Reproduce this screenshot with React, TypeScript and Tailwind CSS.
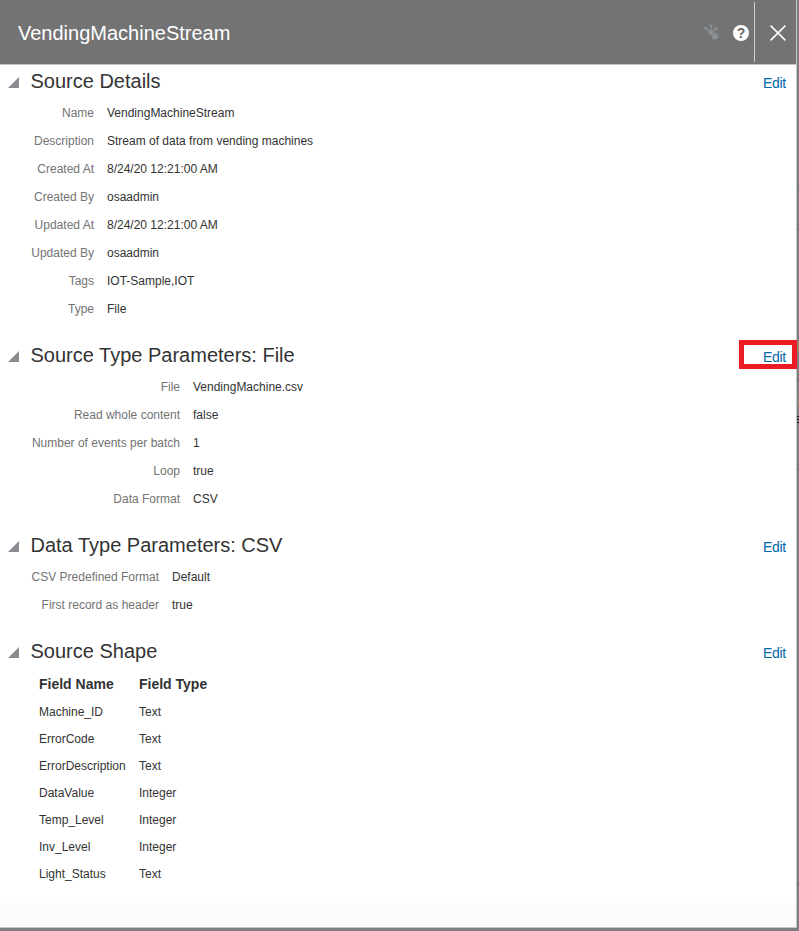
import type { ReactNode } from "react";

type Row = [label: string, value: string];

const details: Row[] = [
  ["Name", "VendingMachineStream"],
  ["Description", "Stream of data from vending machines"],
  ["Created At", "8/24/20 12:21:00 AM"],
  ["Created By", "osaadmin"],
  ["Updated At", "8/24/20 12:21:00 AM"],
  ["Updated By", "osaadmin"],
  ["Tags", "IOT-Sample,IOT"],
  ["Type", "File"],
];

const sourceParams: Row[] = [
  ["File", "VendingMachine.csv"],
  ["Read whole content", "false"],
  ["Number of events per batch", "1"],
  ["Loop", "true"],
  ["Data Format", "CSV"],
];

const dataParams: Row[] = [
  ["CSV Predefined Format", "Default"],
  ["First record as header", "true"],
];

const fields: Row[] = [
  ["Machine_ID", "Text"],
  ["ErrorCode", "Text"],
  ["ErrorDescription", "Text"],
  ["DataValue", "Integer"],
  ["Temp_Level", "Integer"],
  ["Inv_Level", "Integer"],
  ["Light_Status", "Text"],
];

function Section({ title, first, marked, children }: { title: string; first?: boolean; marked?: boolean; children: ReactNode }) {
  return (
    <section>
      <div className={`flex items-end justify-between ${first ? "h-[34px]" : "h-[50px]"}`}>
        <div className="flex h-9 items-center pl-2">
          <svg width="12" height="12" viewBox="0 0 12 12" className="mt-[3px]">
            <path d="M11 0V11H0Z" fill="#8a8d91" />
          </svg>
          <h2 className="ml-[10.5px] text-[20px] leading-9 whitespace-nowrap text-[#333]">{title}</h2>
        </div>
        <div className="relative mr-[10px] h-9 pt-1 text-[14px] leading-8 tracking-[-0.25px] text-[#0068a5]">
          {marked && <span className="absolute top-[3px] -right-[11px] h-[29px] w-[58px] border-5 border-[#ed1c24]" />}
          <a className="relative">Edit</a>
        </div>
      </div>
      {children}
    </section>
  );
}

function Rows({ rows, labelWidth }: { rows: Row[]; labelWidth: string }) {
  return (
    <dl>
      {rows.map(([label, value]) => (
        <div key={label} className="flex h-7 items-center gap-[13px] text-[12px] leading-7 whitespace-nowrap">
          <dt className={`${labelWidth} text-right text-[#737373]`}>{label}</dt>
          <dd className="text-[#333]">{value}</dd>
        </div>
      ))}
    </dl>
  );
}

export default function App() {
  return (
    <div className="relative h-[931px] w-[799px] overflow-hidden bg-[#7f7f7f] font-['Liberation_Sans',Arial,sans-serif]">
      {/* page content showing past the panel's right edge */}
      <svg width="2" height="931" className="absolute top-0 right-0">
        <path d="M1 186h1v1H1z" fill="#1c64b4" />
        <path d="M0 229h2v1H0zM0 380h2v1H0zM0 469h2v1H0zM0 883h2v1H0z" fill="#666" />
        <path d="M1 342h1v10H1z" fill="#a38a55" />
        <path d="M1 399h1v6H1z" fill="#a58a68" />
        <path d="M0 416h2v1H0zM0 419h2v1H0zM0 422h2v1H0z" fill="#171717" />
      </svg>
      <div className="flex h-[928px] w-[797px] flex-col border-r border-b border-[#c6c6c6] bg-white">
        <header className="flex h-[65px] shrink-0 items-center border-b border-[#c6c6c6] bg-[#737373]">
          <h1 className="mt-0.5 ml-[18px] flex-1 text-[20px] leading-8 text-white">VendingMachineStream</h1>
          <svg width="16" height="17" viewBox="0 0 16 17" fill="none" stroke="#8b9399" className="mt-px mr-[13px]">
            <path d="M7 8V2M7 8.5 2 4.5M7 8.5 12 4.5" strokeWidth="1.3" />
            <g fill="#8b9399" stroke="none">
              <circle cx="7" cy="1.8" r="1.4" />
              <circle cx="1.8" cy="4.2" r="1.4" />
              <circle cx="12.2" cy="4.2" r="1.4" />
              <circle cx="6.8" cy="8.6" r="2.4" />
              <circle cx="11" cy="12.2" r="2.8" />
            </g>
            <path d="M11 8v8.4M6.8 12.2h8.4M8.1 9.3l5.8 5.8M13.9 9.3l-5.8 5.8" strokeWidth="1" />
          </svg>
          <span className="mt-0.5 mr-[5px] flex size-4 items-center justify-center rounded-full bg-white text-[14px] leading-4 font-bold text-[#666]">?</span>
          <span className="h-[60px] w-px bg-[#c9d3dc]" />
          <svg width="16" height="16" viewBox="0 0 16 16" fill="none" stroke="white" strokeWidth="1.5" className="mt-0.5 mr-[10px] ml-[15px]">
            <path d="M.6.6 15.4 15.4M15.4.6.6 15.4" />
          </svg>
        </header>
        <main className="h-[838px] shrink-0">
          <Section title="Source Details" first>
            <Rows rows={details} labelWidth="w-[94px]" />
          </Section>
          <Section title="Source Type Parameters: File" marked>
            <Rows rows={sourceParams} labelWidth="w-[180px]" />
          </Section>
          <Section title="Data Type Parameters: CSV">
            <Rows rows={dataParams} labelWidth="w-[159px]" />
          </Section>
          <Section title="Source Shape">
            <table className="ml-[39px] text-left text-[12px] text-[#333]">
              <thead>
                <tr className="h-[29px] text-[14px]">
                  <th className="w-[100px] p-0 pt-0.5 font-bold">Field Name</th>
                  <th className="w-[100px] p-0 pt-0.5 font-bold">Field Type</th>
                </tr>
              </thead>
              <tbody>
                {fields.map(([name, type]) => (
                  <tr key={name} className="h-[27px]">
                    <td className="p-0">{name}</td>
                    <td className="p-0">{type}</td>
                  </tr>
                ))}
              </tbody>
            </table>
          </Section>
        </main>
        <footer className="flex-1 bg-[#fbfbfb]" />
      </div>
    </div>
  );
}
